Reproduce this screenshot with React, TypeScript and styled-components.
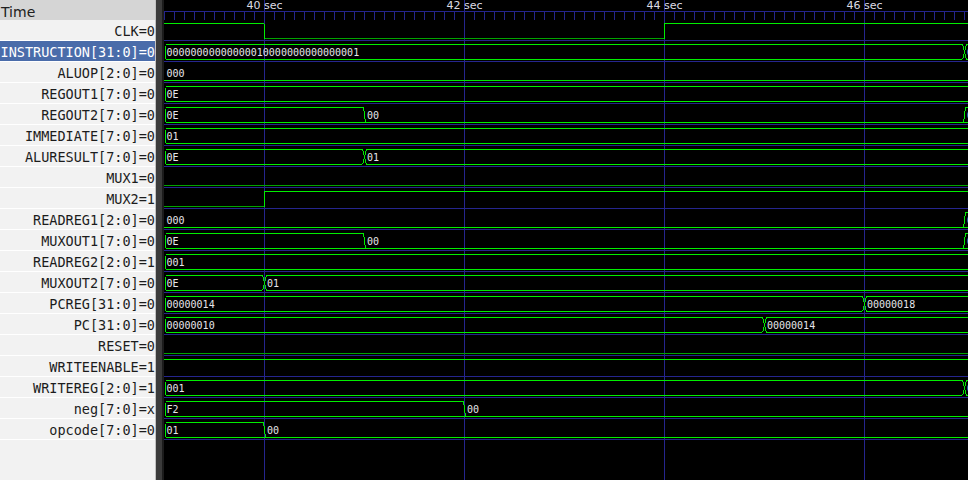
import React from "react";
import styled, {createGlobalStyle} from "styled-components";

const WAVE_WIDTH = 804;
const HI = 3;
const LO = 18;
const GRID = "#25258e";
const TRACE = "#00ee00";
const TRACE_LOW = "#00a400";

type Seg = {at: number; value: string};
type Signal = {label: string; bus: boolean; segs: Seg[]};

const bit = (label: string, ...segs: [number, string][]): Signal => ({
  label,
  bus: false,
  segs: segs.map(([at, value]) => ({at, value}))
});

const bus = (label: string, ...segs: [number, string][]): Signal => ({
  label,
  bus: true,
  segs: segs.map(([at, value]) => ({at, value}))
});

const signals: Signal[] = [
  bit("CLK=0", [0, "1"], [100, "0"], [500, "1"]),
  bus("INSTRUCTION[31:0]=0", [0, "00000000000000010000000000000001"], [800, "00000000000000100000000000000010"]),
  bus("ALUOP[2:0]=0", [0, "000"]),
  bus("REGOUT1[7:0]=0", [0, "0E"]),
  bus("REGOUT2[7:0]=0", [0, "0E"], [200, "00"], [800, "0F"]),
  bus("IMMEDIATE[7:0]=0", [0, "01"]),
  bus("ALURESULT[7:0]=0", [0, "0E"], [200, "01"]),
  bit("MUX1=0", [0, "0"]),
  bit("MUX2=1", [0, "0"], [100, "1"]),
  bus("READREG1[2:0]=0", [0, "000"], [800, "010"]),
  bus("MUXOUT1[7:0]=0", [0, "0E"], [200, "00"], [800, "0F"]),
  bus("READREG2[2:0]=1", [0, "001"]),
  bus("MUXOUT2[7:0]=0", [0, "0E"], [100, "01"]),
  bus("PCREG[31:0]=0", [0, "00000014"], [700, "00000018"]),
  bus("PC[31:0]=0", [0, "00000010"], [600, "00000014"]),
  bit("RESET=0", [0, "0"]),
  bit("WRITEENABLE=1", [0, "1"]),
  bus("WRITEREG[2:0]=1", [0, "001"], [800, "010"]),
  bus("neg[7:0]=x", [0, "F2"], [300, "00"]),
  bus("opcode[7:0]=0", [0, "01"], [100, "00"])
];

const SELECTED = 1;
const rulerMarks = [{x: 100, text: "40 sec"}, {x: 300, text: "42 sec"}, {x: 500, text: "44 sec"}, {x: 700, text: "46 sec"}];

const isZero = (v: string) => /^0+$/.test(v);
const hline = (y: number, a: number, b: number) => `M${a} ${y + 0.5}H${b}`;
const seg = (x1: number, y1: number, x2: number, y2: number) =>
  `M${x1 + 0.5} ${y1 + 0.5}L${x2 + 0.5} ${y2 + 0.5}`;

// zero-valued vectors are drawn as a bare low line, like gtkwave does
const busPaths = (segs: Seg[]) => {
  let d = "";
  const labels: {x: number; text: string}[] = [];

  segs.forEach((s, i) => {
    const prev = segs[i - 1];
    const next = segs[i + 1];
    const zero = isZero(s.value);
    const end = next ? next.at : WAVE_WIDTH + 6;

    let topStart = s.at;
    let botStart = s.at;
    if (!prev) {
      if (!zero) {
        d += seg(2, HI, 1, HI + 1) + seg(1, HI + 1, 1, LO - 1) + seg(1, LO - 1, 2, LO);
        topStart = botStart = 2;
      }
    } else {
      const pz = isZero(prev.value);
      if (!pz && !zero) {
        topStart = botStart = s.at + 2;
      } else if (pz && !zero) {
        topStart = s.at + 1;
      }
    }

    let topEnd = end;
    let botEnd = end;
    if (next) {
      const nz = isZero(next.value);
      if (!zero && !nz) {
        topEnd = botEnd = end - 2;
        d += seg(end - 2, HI, end + 2, LO) + seg(end - 2, LO, end + 2, HI);
      } else if (!zero && nz) {
        topEnd = end - 1;
        d += seg(end - 1, HI, end + 1, LO);
      } else if (zero && !nz) {
        d += seg(end - 1, LO, end + 1, HI);
      }
    }

    if (!zero) d += hline(HI, topStart, topEnd);
    d += hline(LO, botStart, botEnd);
    labels.push({x: prev ? s.at + 3 : 2.5, text: s.value});
  });

  return {d, labels};
};

const bitPaths = (segs: Seg[]) => {
  let high = "";
  let low = "";
  segs.forEach((s, i) => {
    const next = segs[i + 1];
    const end = next ? next.at : WAVE_WIDTH + 6;
    if (s.value === "1") high += hline(HI, s.at, end);
    else low += hline(LO, s.at, end);
    if (next) high += seg(end, HI, end, LO);
  });
  return {high, low};
};

const Trace: React.FC<{signal: Signal}> = ({signal}) => {
  if (!signal.bus) {
    const {high, low} = bitPaths(signal.segs);
    return (
      <svg width={WAVE_WIDTH} height={20} shapeRendering="crispEdges">
        <path d={low} stroke={TRACE_LOW} fill="none"/>
        <path d={high} stroke={TRACE} fill="none"/>
      </svg>
    );
  }

  const {d, labels} = busPaths(signal.segs);
  return (
    <svg width={WAVE_WIDTH} height={20} shapeRendering="crispEdges">
      <path d={d} stroke={TRACE} fill="none"/>
      {labels.map((l) => (
        <ValueText key={l.x} x={l.x} y={15}>{l.text}</ValueText>
      ))}
    </svg>
  );
};

const Ruler: React.FC = () => (
  <RulerBar>
    <svg width={WAVE_WIDTH} height={20} shapeRendering="crispEdges">
      <path d={hline(11, 0, WAVE_WIDTH)} stroke={GRID}/>
      <path
        d={Array.from({length: 81}, (_, n) => `M${n * 10 + 0.5} 12V20`).join("")}
        stroke={GRID}/>
      {rulerMarks.map((m) => (
        <RulerText key={m.x} x={m.x + 0.5} y={9} textAnchor="middle">{m.text}</RulerText>
      ))}
    </svg>
  </RulerBar>
);

export default function App() {
  return (
    <>
      <GlobalStyle/>
      <Viewer>
        <SignalPanel>
          <PanelHeader>Time</PanelHeader>
          {signals.map((s, i) => (
            <SignalRow key={s.label} $selected={i === SELECTED}>{s.label}</SignalRow>
          ))}
        </SignalPanel>

        <Splitter/>

        <WavePanel>
          <Ruler/>
          {signals.map((s) => (
            <WaveRow key={s.label}>
              <Trace signal={s}/>
            </WaveRow>
          ))}
        </WavePanel>
      </Viewer>
    </>
  );
}

const GlobalStyle = createGlobalStyle`
  html, body, #root {
    margin: 0;
    padding: 0;
    height: 100%;
    background: #000;
    overflow: hidden;
  }
`;

const Viewer = styled.div`
  display: flex;
  width: 100%;
  height: 100vh;
`;

const SignalPanel = styled.div`
  width: 155px;
  flex-shrink: 0;
  display: flex;
  flex-direction: column;
  background-color: #f2f2f2;
  overflow: hidden;
`;

const PanelHeader = styled.div`
  height: 20px;
  padding-left: 1px;
  background-color: #d5d5d5;
  color: #202020;
  font: 14px/24px "DejaVu Sans", sans-serif;
  overflow: hidden;
`;

const SignalRow = styled.div<{$selected?: boolean}>`
  height: 20px;
  border-bottom: 1px solid #ffffff;
  display: flex;
  justify-content: flex-end;
  white-space: nowrap;
  font: 13.5px/23px "DejaVu Sans Mono", monospace;
  color: ${({$selected}) => ($selected ? "#ffffff" : "#1c1c1c")};
  background-color: ${({$selected}) => ($selected ? "#4a6caa" : "transparent")};
`;

const Splitter = styled.div`
  width: 9px;
  flex-shrink: 0;
  box-sizing: border-box;
  background-color: #3b3b3b;
  border-left: 1px solid #c2c2c2;
  border-right: 2px solid #1c1c1c;
`;

const WavePanel = styled.div`
  flex: 1;
  display: flex;
  flex-direction: column;
  overflow: hidden;
  background-color: #000;
  background-image: repeating-linear-gradient(
    to right,
    transparent 0 100px,
    ${GRID} 100px 101px,
    transparent 101px 200px
  );
`;

const RulerBar = styled.div`
  height: 20px;
  svg {
    display: block;
  }
`;

const RulerText = styled.text`
  font: 11px "DejaVu Sans", sans-serif;
  fill: #dcdce4;
`;

const WaveRow = styled.div`
  height: 20px;
  border-bottom: 1px solid ${GRID};
  svg {
    display: block;
    overflow: hidden;
  }
`;

const ValueText = styled.text`
  font: 10px "DejaVu Sans Mono", monospace;
  fill: #e6e6ea;
`;
